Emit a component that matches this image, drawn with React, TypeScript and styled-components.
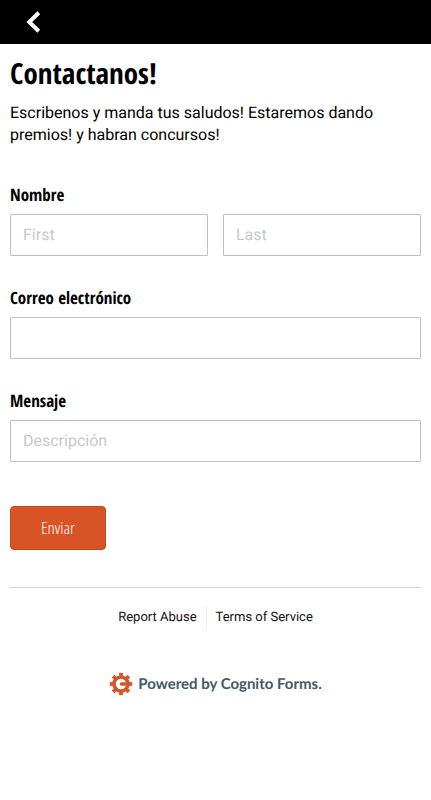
import React from "react";
import styled, { createGlobalStyle } from "styled-components";

const condensed = `"Open Sans Condensed", "Open Sans", sans-serif`;
const condensedLight = `"Open Sans Condensed Light", "Open Sans Light Condensed", "Open Sans Condensed", sans-serif`;

const GlobalStyle = createGlobalStyle`
  *, *::before, *::after { box-sizing: border-box; }
  body {
    margin: 0;
    background: #fff;
    color: #000;
    font-family: Roboto, sans-serif;
    font-size: 16px;
    text-rendering: geometricPrecision;
  }
`;

const TopBar = styled.header`
  display: flex;
  align-items: center;
  height: 44px;
  padding: 0 24px;
  background: #000;
`;

const BackButton = styled.button`
  display: flex;
  padding: 0;
  border: 0;
  background: none;
  color: #fff;
  cursor: pointer;
`;

const Content = styled.main`
  padding: 12px 10px;
`;

const Title = styled.h1`
  margin: 0;
  font: 700 29px/36px ${condensed};
`;

const Intro = styled.p`
  margin: 10px 0 0;
  line-height: 22px;
`;

const Form = styled.form`
  display: flex;
  flex-direction: column;
  gap: 30px;
  margin-top: 37px;
`;

const Field = styled.div`
  display: flex;
  flex-direction: column;
  min-width: 0;
`;

const Label = styled.label`
  margin-bottom: 8px;
  font: 700 17px/23px ${condensed};
`;

const NameRow = styled.div`
  display: grid;
  grid-template-columns: 1fr 1fr;
  gap: 15px;
`;

const TextInput = styled.input`
  width: 100%;
  min-width: 0;
  height: 42px;
  padding: 0 12px 2px;
  border: 1px solid #c0c0c0;
  border-radius: 1px;
  background: #fff;
  color: #000;
  font: 16px Roboto, sans-serif;
  text-rendering: inherit;

  &::placeholder {
    color: #c8c8c8;
    opacity: 1;
  }
`;

const SubmitButton = styled.button`
  align-self: flex-start;
  height: 44px;
  margin-top: 14px;
  padding: 0 30px 2px;
  border: 1px solid #c44a1f;
  border-radius: 4px;
  background: #d85427;
  color: #fff;
  font: 300 17px ${condensedLight};
  cursor: pointer;
`;

const Footer = styled.footer`
  display: flex;
  flex-direction: column;
  align-items: center;
  gap: 43px;
  margin-top: 37px;
  padding-top: 19px;
  border-top: 1px solid #d6d6d6;
`;

const LegalLinks = styled.nav`
  display: flex;
`;

const LegalLink = styled.a`
  padding: 0 9px;
  color: #111;
  font-size: 13px;
  line-height: 22px;
  text-decoration: none;

  & + & {
    border-left: 1px solid #ececec;
  }
`;

const Brand = styled.a`
  display: flex;
  align-items: center;
  gap: 5px;
  color: #41595f;
  font: 700 15px/24px Lato, sans-serif;
  text-decoration: none;
`;

function BackIcon() {
  return (
    <svg width="20" height="22" viewBox="0 0 20 22" fill="none" aria-hidden="true">
      <path d="M14.8 1.8 5.3 11 14.8 20.2" stroke="currentColor" strokeWidth="4" />
    </svg>
  );
}

function CognitoLogo() {
  return (
    <svg width="24" height="24" viewBox="-12 -12 24 24" aria-hidden="true">
      <g fill="none" stroke="#d0582b">
        <circle r="7" strokeWidth="3.6" />
        {[0, 45, 90, 135, 180, 225, 270, 315].map((angle) => (
          <path key={angle} d="M0-8V-11.2" strokeWidth="3.8" transform={`rotate(${angle})`} />
        ))}
        <path d="M0.4 0H7" strokeWidth="3.4" strokeLinecap="round" />
      </g>
    </svg>
  );
}

export default function App() {
  return (
    <>
      <GlobalStyle />
      <TopBar>
        <BackButton type="button" aria-label="Back">
          <BackIcon />
        </BackButton>
      </TopBar>
      <Content>
        <Title>Contactanos!</Title>
        <Intro>Escribenos y manda tus saludos! Estaremos dando premios! y habran concursos!</Intro>
        <Form onSubmit={(event) => event.preventDefault()}>
          <Field>
            <Label htmlFor="first-name">Nombre</Label>
            <NameRow>
              <TextInput id="first-name" type="text" placeholder="First" />
              <TextInput type="text" placeholder="Last" aria-label="Last" />
            </NameRow>
          </Field>
          <Field>
            <Label htmlFor="email">Correo electrónico</Label>
            <TextInput id="email" type="email" />
          </Field>
          <Field>
            <Label htmlFor="message">Mensaje</Label>
            <TextInput id="message" type="text" placeholder="Descripción" />
          </Field>
          <SubmitButton type="submit">Enviar</SubmitButton>
        </Form>
        <Footer>
          <LegalLinks>
            <LegalLink href="#report">Report Abuse</LegalLink>
            <LegalLink href="#terms">Terms of Service</LegalLink>
          </LegalLinks>
          <Brand href="#cognito">
            <CognitoLogo />
            Powered by Cognito Forms.
          </Brand>
        </Footer>
      </Content>
    </>
  );
}
